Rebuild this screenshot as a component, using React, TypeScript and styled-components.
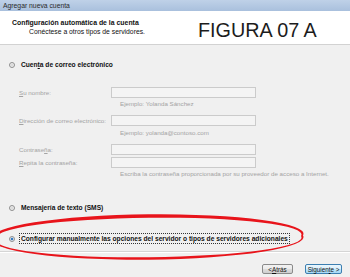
import React from "react";
import styled, { createGlobalStyle } from "styled-components";

const GlobalStyle = createGlobalStyle`
  html, body {
    margin: 0;
    padding: 0;
    background: #f0f0f0;
  }
  body {
    font-family: "Liberation Sans", Arial, sans-serif;
  }
`;

const Window = styled.div`
  width: 350px;
  height: 277px;
  display: flex;
  flex-direction: column;
  background: #f0f0f0;
  position: relative;
  overflow: hidden;
`;

const TitleBar = styled.div`
  height: 11px;
  display: flex;
  align-items: center;
  padding-left: 3px;
  background: linear-gradient(180deg, #bfd1e8 0%, #a9c0dd 100%);
  color: #2a2a2a;
  font-size: 6.8px;
`;

const Header = styled.div`
  height: 33px;
  display: flex;
  background: #ffffff;
  border-bottom: 1px solid #d2d2d2;
`;

const HeaderText = styled.div`
  width: 186px;
  padding: 6.5px 0 0 12px;
  line-height: 9px;
  font-size: 6.8px;
  color: #111;
`;

const HeaderTitle = styled.div`
  font-weight: bold;
  font-size: 6.9px;
`;

const HeaderSub = styled.div`
  padding-left: 17px;
`;

const Figure = styled.div`
  padding-top: 9.5px;
  font-size: 19.8px;
  line-height: 1;
  color: #1c1c1c;
`;

const Body = styled.div`
  flex: 1;
  display: flex;
  flex-direction: column;
`;

const Option = styled.div<{ $top: number }>`
  margin-top: ${(p) => p.$top}px;
  height: 11px;
  display: flex;
  align-items: center;
  padding-left: 9px;
  gap: 4px;
  font-size: 6.65px;
  font-weight: bold;
  color: #111;
`;

const Radio = styled.span<{ $checked?: boolean }>`
  width: 6px;
  height: 6px;
  border-radius: 50%;
  border: 1px solid #8e8f8f;
  box-sizing: border-box;
  background: ${(p) =>
    p.$checked
      ? "radial-gradient(circle, #1f5c9e 0%, #3f86cf 35%, #e8eef5 60%)"
      : "radial-gradient(circle, #d0d0d0 0%, #f4f4f4 70%)"};
`;

const OptionLabel = styled.span<{ $focused?: boolean }>`
  padding: 0 1px;
  line-height: 9px;
  border: 1px dotted ${(p) => (p.$focused ? "#333" : "transparent")};
`;

const Form = styled.div`
  display: flex;
  flex-direction: column;
  padding-left: 19px;
`;

const Field = styled.div<{ $top: number }>`
  margin-top: ${(p) => p.$top}px;
  display: flex;
  align-items: center;
`;

const FieldLabel = styled.span`
  width: 92px;
  font-size: 6.2px;
  color: #a3a3a3;
`;

const Input = styled.div`
  width: 145px;
  height: 11px;
  box-sizing: border-box;
  border: 1px solid #cbcbcb;
  background: #f4f4f4;
`;

const Hint = styled.div<{ $top: number }>`
  margin-top: ${(p) => p.$top}px;
  padding-left: 101px;
  height: 8px;
  line-height: 8px;
  font-size: 6.2px;
  color: #a3a3a3;
  white-space: nowrap;
`;

const Footer = styled.div`
  height: 26px;
  box-sizing: border-box;
  border-top: 1px solid #d5d5d5;
  box-shadow: inset 0 1px #ffffff;
  display: flex;
  justify-content: flex-end;
  align-items: flex-start;
  gap: 12px;
  padding: 12px 8px 0 0;
`;

const Button = styled.div<{ $primary?: boolean; $width: number }>`
  width: ${(p) => p.$width}px;
  height: 10px;
  box-sizing: border-box;
  border: 1px solid ${(p) => (p.$primary ? "#3c7fb1" : "#8a8a8a")};
  border-radius: 2px;
  background: ${(p) =>
    p.$primary
      ? "linear-gradient(180deg, #eaf6fd 0%, #d9f0fc 50%, #bee6fd 51%, #a7d9f5 100%)"
      : "linear-gradient(180deg, #f2f2f2 0%, #ebebeb 50%, #dddddd 51%, #cfcfcf 100%)"};
  display: flex;
  align-items: center;
  justify-content: center;
  font-size: 6.3px;
  color: #111;
`;

const Ellipse = styled.svg`
  position: absolute;
  left: 0;
  top: 0;
  pointer-events: none;
`;

export default function App() {
  return (
    <>
      <GlobalStyle />
      <Window>
        <TitleBar>Agregar nueva cuenta</TitleBar>
        <Header>
          <HeaderText>
            <HeaderTitle>Configuración automática de la cuenta</HeaderTitle>
            <HeaderSub>Conéctese a otros tipos de servidores.</HeaderSub>
          </HeaderText>
          <Figure>FIGURA 07 A</Figure>
        </Header>
        <Body>
          <Option $top={14}>
            <Radio />
            <OptionLabel>
              Cuen<u>t</u>a de correo electrónico
            </OptionLabel>
          </Option>
          <Form>
            <Field $top={17}>
              <FieldLabel>
                <u>S</u>u nombre:
              </FieldLabel>
              <Input />
            </Field>
            <Hint $top={2}>Ejemplo: Yolanda Sánchez</Hint>
            <Field $top={7}>
              <FieldLabel>
                <u>D</u>irección de correo electrónico:
              </FieldLabel>
              <Input />
            </Field>
            <Hint $top={3}>Ejemplo: yolanda@contoso.com</Hint>
            <Field $top={7}>
              <FieldLabel>
                Contrase<u>ñ</u>a:
              </FieldLabel>
              <Input />
            </Field>
            <Field $top={2}>
              <FieldLabel>
                <u>R</u>epita la contraseña:
              </FieldLabel>
              <Input />
            </Field>
            <Hint $top={2}>
              Escriba la contraseña proporcionada por su proveedor de acceso a Internet.
            </Hint>
          </Form>
          <Option $top={24}>
            <Radio />
            <OptionLabel>Mensajería de texto (SMS)</OptionLabel>
          </Option>
          <Option $top={20}>
            <Radio $checked />
            <OptionLabel $focused>
              Configurar manualmente las opciones del servidor o tipos de servidores adicionales
            </OptionLabel>
          </Option>
        </Body>
        <Footer>
          <Button $width={31}>
            &lt; <u>A</u>trás
          </Button>
          <Button $width={37} $primary>
            Siguien<u>t</u>e &gt;
          </Button>
        </Footer>
        <Ellipse width={350} height={277} viewBox="0 0 350 277">
          <path
            fillRule="evenodd"
            fill="#e8141b"
            transform="rotate(-0.6 149 237)"
            d="M -6 237 A 155 21 0 1 0 303 237 A 155 21 0 1 0 -6 237 Z M -3 237.5 A 152.5 18.3 0 1 0 301 237.5 A 152.5 18.3 0 1 0 -3 237.5 Z"
          />
        </Ellipse>
      </Window>
    </>
  );
}
